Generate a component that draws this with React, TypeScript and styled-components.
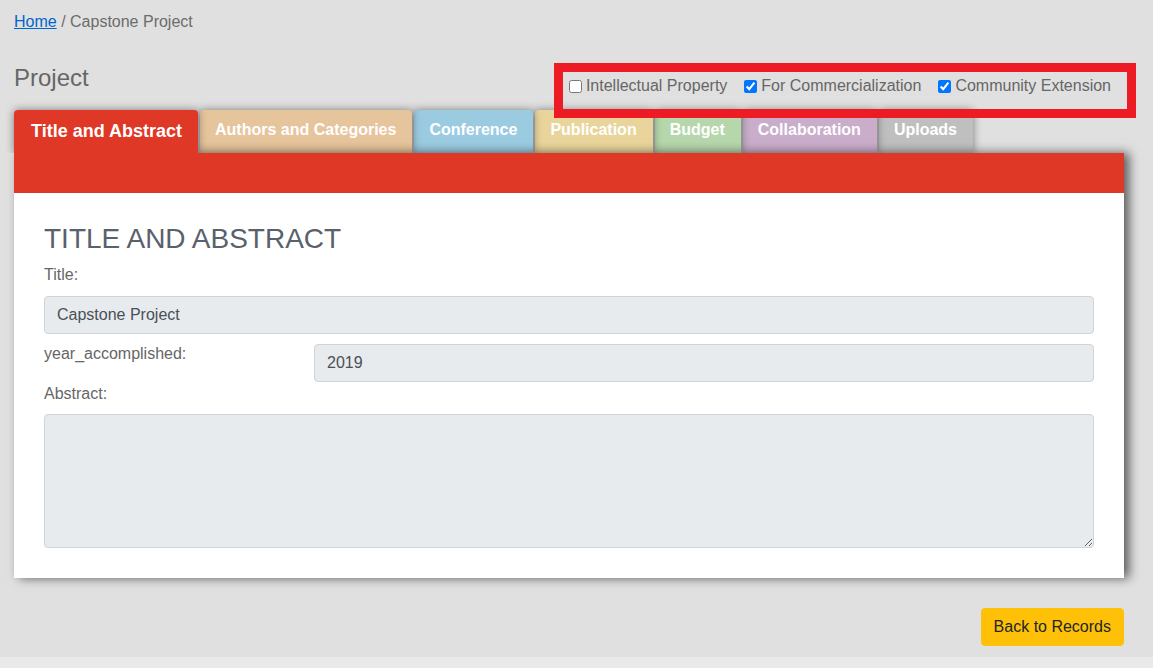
import React from "react";
import styled, { createGlobalStyle } from "styled-components";

const GlobalStyle = createGlobalStyle`
  html, body {
    margin: 0;
    padding: 0;
    background: #e9e9e9;
    font-family: "Liberation Sans", Arial, sans-serif;
  }
  * { box-sizing: border-box; }
`;

const Page = styled.div`
  background: #e0e0e0;
  padding: 10px 29px 11px 14px;
  color: #666;
  font-size: 16px;
  line-height: 24px;
`;

const Breadcrumb = styled.nav`
  font-size: 16px;
  line-height: 24px;
  color: #6c6c6c;
`;

const Crumb = styled.a`
  color: #0066cc;
  text-decoration: underline;
  cursor: pointer;
`;

const HeaderRow = styled.div`
  margin-top: 30px;
  display: flex;
  justify-content: space-between;
  align-items: flex-start;
  height: 45px;
`;

const PageTitle = styled.h1`
  margin: 0;
  font-size: 24px;
  line-height: 28px;
  font-weight: 400;
  color: #666;
`;

const CheckGroup = styled.div`
  margin-top: 8px;
  margin-right: -3px;
  height: 37px;
  padding: 2px 16px 11px 2px;
  display: flex;
  align-items: flex-start;
  gap: 13px;
  outline: 9px solid #ed1c24;
  outline-offset: 0;
  position: relative;
  z-index: 30;
`;

const CheckLabel = styled.label`
  display: flex;
  align-items: center;
  color: #666;
  font-size: 16px;
  line-height: 24px;
  white-space: nowrap;
`;

const Check = styled.input`
  width: 13px;
  height: 13px;
  margin: 3px 4px 3px 4px;
  accent-color: #0075ff;
`;

const TabRow = styled.div`
  margin-top: 1px;
  display: flex;
  gap: 2px;
  height: 43px;
`;

const Tab = styled.div<{ $color: string; $active?: boolean; $z: number }>`
  position: relative;
  z-index: ${(p) => (p.$active ? 20 : p.$z)};
  background: ${(p) => p.$color};
  color: #fff;
  font-weight: 700;
  font-size: ${(p) => (p.$active ? "18px" : "16px")};
  line-height: ${(p) => (p.$active ? "27px" : "24px")};
  padding: ${(p) => (p.$active ? "8px 16px 0 17px" : "8px 16px 0 15px")};
  border-radius: 4px 4px 0 0;
  box-shadow: 0 0 9px rgba(0, 0, 0, 0.45);
  clip-path: ${(p) => (p.$active ? "inset(-12px -12px 0 -12px)" : "none")};
  white-space: nowrap;
  cursor: pointer;
`;

const Panel = styled.section`
  position: relative;
  z-index: 10;
  background: #fff;
  box-shadow: 5px 0 10px rgba(0, 0, 0, 0.6);
`;

const PanelHeader = styled.div`
  height: 40px;
  background: #e03826;
`;

const PanelBody = styled.div`
  padding: 30px 30px 30px 30px;
`;

const SectionTitle = styled.h2`
  margin: 0 0 8px 0;
  font-size: 28px;
  line-height: 32px;
  font-weight: 400;
  color: #59616a;
`;

const FieldLabel = styled.label<{ $gap?: number }>`
  display: block;
  color: #666;
  font-size: 16px;
  line-height: 24px;
  margin-bottom: ${(p) => p.$gap ?? 9}px;
`;

const TextInput = styled.input`
  display: block;
  width: 100%;
  height: 38px;
  padding: 6px 12px;
  background: #e8ebee;
  border: 1px solid #ced4da;
  border-radius: 4px;
  color: #495057;
  font-family: "Liberation Sans", Arial, sans-serif;
  font-size: 16px;
  line-height: 24px;
`;

const FieldRow = styled.div`
  margin-top: 10px;
  display: grid;
  grid-template-columns: 270px 1fr;
  align-items: start;
`;

const RowLabel = styled.label`
  color: #666;
  font-size: 16px;
  line-height: 24px;
  margin-top: -2px;
`;

const TextArea = styled.textarea`
  display: block;
  width: 100%;
  height: 134px;
  padding: 6px 12px;
  background: #e8ebee;
  border: 1px solid #ced4da;
  border-radius: 4px;
  color: #495057;
  font-family: "Liberation Sans", Arial, sans-serif;
  font-size: 16px;
  line-height: 24px;
  resize: vertical;
`;

const Footer = styled.div`
  margin-top: 30px;
  display: flex;
  justify-content: flex-end;
`;

const BackButton = styled.button`
  height: 38px;
  padding: 6px 12px;
  background: #ffc107;
  border: 1px solid #ffc107;
  border-radius: 4px;
  color: #212529;
  font-family: "Liberation Sans", Arial, sans-serif;
  font-size: 16px;
  line-height: 24px;
  cursor: pointer;
`;

const tabs = [
  { label: "Title and Abstract", color: "#e03826", active: true },
  { label: "Authors and Categories", color: "#e6c49c" },
  { label: "Conference", color: "#9bcbe1" },
  { label: "Publication", color: "#e9d59c" },
  { label: "Budget", color: "#b6d6ac" },
  { label: "Collaboration", color: "#c9adca" },
  { label: "Uploads", color: "#bfbfbf" },
];

export default function App() {
  return (
    <>
      <GlobalStyle />
      <Page>
        <Breadcrumb>
          <Crumb>Home</Crumb> / Capstone Project
        </Breadcrumb>
        <HeaderRow>
          <PageTitle>Project</PageTitle>
          <CheckGroup>
            <CheckLabel>
              <Check type="checkbox" />
              Intellectual Property
            </CheckLabel>
            <CheckLabel>
              <Check type="checkbox" defaultChecked />
              For Commercialization
            </CheckLabel>
            <CheckLabel>
              <Check type="checkbox" defaultChecked />
              Community Extension
            </CheckLabel>
          </CheckGroup>
        </HeaderRow>
        <TabRow>
          {tabs.map((t, i) => (
            <Tab key={t.label} $color={t.color} $active={t.active} $z={8 - i}>
              {t.label}
            </Tab>
          ))}
        </TabRow>
        <Panel>
          <PanelHeader />
          <PanelBody>
            <SectionTitle>TITLE AND ABSTRACT</SectionTitle>
            <FieldLabel>Title:</FieldLabel>
            <TextInput defaultValue="Capstone Project" />
            <FieldRow>
              <RowLabel>year_accomplished:</RowLabel>
              <TextInput defaultValue="2019" />
            </FieldRow>
            <FieldLabel $gap={8}>Abstract:</FieldLabel>
            <TextArea />
          </PanelBody>
        </Panel>
        <Footer>
          <BackButton>Back to Records</BackButton>
        </Footer>
      </Page>
    </>
  );
}
